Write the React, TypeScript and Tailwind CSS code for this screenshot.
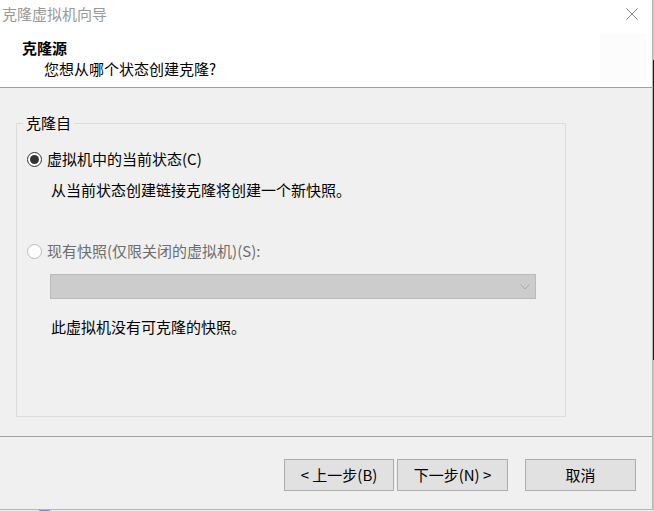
import React from 'react'

const font = { fontFamily: '"Noto Sans CJK SC", "Noto Sans", sans-serif' }

function Radio({ checked, disabled }: { checked?: boolean; disabled?: boolean }) {
  return (
    <span
      className={`flex h-[15px] w-[15px] shrink-0 items-center justify-center rounded-full border ${
        disabled ? 'border-[#bcbcbc] bg-[#fdfdfd]' : 'border-[#333333] bg-white'
      }`}
    >
      {checked && <span className="h-[9px] w-[9px] rounded-full bg-[#333333]" />}
    </span>
  )
}

export default function App() {
  return (
    <div className="flex h-[511px] w-[654px] flex-col overflow-hidden bg-[#f0f0f0] text-[15px] text-black" style={font}>
      <div className="flex h-[510px]">
        <div className="flex w-[653px] flex-col border-r border-b border-[#b4b4b4]">
          {/* title bar */}
          <div className="flex h-[27px] items-center justify-between bg-white pl-[2px] pr-[14px]">
            <span className="leading-[20px] text-[#999999]">克隆虚拟机向导</span>
            <svg width="12" height="12" viewBox="0 0 12 12" className="text-[#8a8a8a]">
              <path d="M0.5 0.5 L11.5 11.5 M11.5 0.5 L0.5 11.5" stroke="currentColor" strokeWidth="1" fill="none" />
            </svg>
          </div>

          {/* header */}
          <div className="flex h-[61px] items-start justify-between border-b border-[#a0a0a0] bg-white">
            <div className="pl-[22px] pt-[11px]">
              <div className="font-bold leading-[20px]">克隆源</div>
              <div className="mt-[1px] pl-[22px] leading-[20px]">您想从哪个状态创建克隆?</div>
            </div>
            <div className="mr-[5px] mt-[6px] h-[49px] w-[47px] bg-[#fcfcfc]" />
          </div>

          {/* body */}
          <div className="h-[349px] border-b border-[#a0a0a0]">
            <div className="relative ml-[16px] mt-[35px] h-[294px] w-[550px] border border-[#dcdcdc] pl-[10px] pt-[25px]">
              <span className="absolute left-[6px] top-[-11px] bg-[#f0f0f0] px-[3px] leading-[20px]">克隆自</span>

              <div className="flex h-[20px] items-center gap-[5px]">
                <Radio checked />
                <span className="leading-[20px]">虚拟机中的当前状态(C)</span>
              </div>
              <div className="ml-[24px] mt-[11px] leading-[20px]">从当前状态创建链接克隆将创建一个新快照。</div>

              <div className="mt-[41px] flex h-[20px] items-center gap-[5px]">
                <Radio disabled />
                <span className="leading-[20px] text-[#6d6d6d]">现有快照(仅限关闭的虚拟机)(S):</span>
              </div>

              <div className="ml-[23px] mt-[13px] flex h-[25px] w-[486px] items-center justify-end border border-[#bababa] bg-[#cccccc] pr-[5px]">
                <svg width="10" height="6" viewBox="0 0 10 6" className="text-[#a8a8a8]">
                  <path d="M0.5 0.5 L5 5 L9.5 0.5" stroke="currentColor" strokeWidth="1" fill="none" />
                </svg>
              </div>

              <div className="ml-[24px] mt-[18px] leading-[20px]">此虚拟机没有可克隆的快照。</div>
            </div>
          </div>

          {/* footer */}
          <div className="flex flex-1 items-start justify-end pr-[16px] pt-[22px]">
            <button className="h-[32px] w-[110px] border border-[#adadad] bg-[#e1e1e1] leading-[20px]">&lt; 上一步(B)</button>
            <button className="ml-[3px] h-[32px] w-[111px] border border-[#adadad] bg-[#e1e1e1] leading-[20px]">下一步(N) &gt;</button>
            <button className="ml-[17px] h-[32px] w-[111px] border border-[#adadad] bg-[#e1e1e1] leading-[20px]">取消</button>
          </div>
        </div>

        {/* edge of the window behind */}
        <div className="flex w-[1px] flex-col">
          <div className="h-[60px] bg-[#c8c8c8]" />
          <div className="h-[300px] bg-[#1e1e1e]" />
          <div className="flex-1 bg-[#c8c8c8]" />
        </div>
      </div>

      <div className="flex h-[1px]">
        <div className="w-[39px]" />
        <div className="w-[11px] bg-[#8c8cb4]" />
      </div>
    </div>
  )
}
